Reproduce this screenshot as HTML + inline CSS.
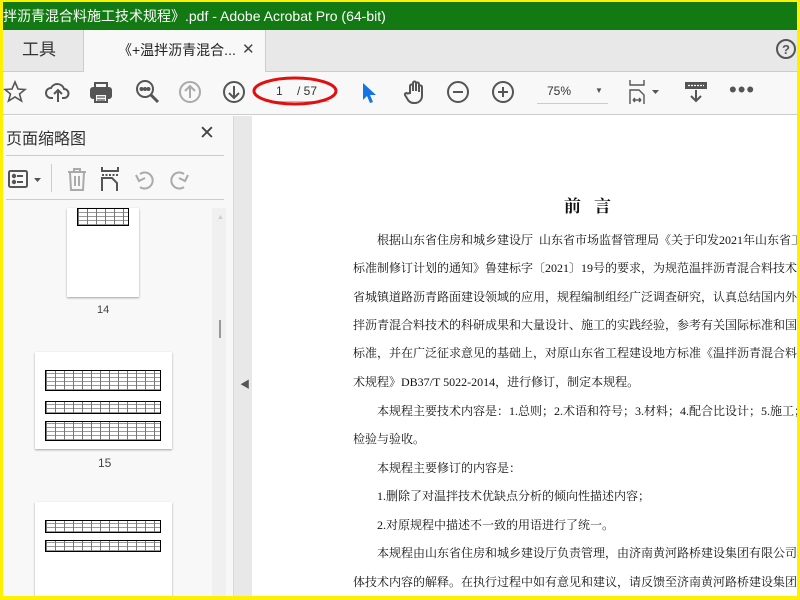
<!DOCTYPE html>
<html><head><meta charset="utf-8"><style>
*{margin:0;padding:0;box-sizing:border-box}
body{width:800px;height:600px;overflow:hidden;position:relative;background:#ffef00;font-family:"Liberation Sans","Noto Sans CJK SC",sans-serif}
.a{position:absolute}
#app{position:absolute;left:3px;top:2px;width:794px;height:594px;background:#fff;overflow:hidden}
.title{left:0;top:0;width:794px;height:28px;background:#137913;color:#fff;font-size:14px;line-height:28px;padding-left:0;white-space:nowrap}
.tabs{left:0;top:28px;width:794px;height:42px;background:#e8e8e8;border-bottom:1px solid #ccc}
.tb{left:0;top:70px;width:794px;height:43px;background:#f8f8f8;border-bottom:1px solid #ccc}
.ic{position:absolute;stroke:#555;fill:none;stroke-width:2}
.panel{left:0;top:114px;width:230px;height:480px;background:#f8f8f8}
.div{left:230px;top:114px;width:19px;height:480px;background:#e8e8e8;border-left:1px solid #d8d8d8}
.doc{left:249px;top:114px;width:545px;height:480px;background:#fff;font-family:"Liberation Serif","Noto Serif CJK SC",serif;font-size:12px;color:#111;white-space:nowrap}
.doc p{position:absolute;left:101px}
.doc p.i{left:125px}
.th{position:absolute;background:#fff;box-shadow:0 1px 2px rgba(0,0,0,.35)}
.tbl{position:absolute;border:1px solid #000;background:repeating-linear-gradient(90deg,#777 0 1px,transparent 1px 9px),repeating-linear-gradient(0deg,#999 0 1px,#fff 1px 4px)}
</style></head><body><div id="app">
<div class="a title">拌沥青混合料施工技术规程》.pdf - Adobe Acrobat Pro (64-bit)</div>
<div class="a tabs">
 <div class="a" style="left:0;top:0;width:81px;height:42px;border-right:1px solid #ccc;font-size:17px;color:#333;line-height:40px;padding-left:19px">工具</div>
 <div class="a" style="left:81px;top:0;width:182px;height:43px;background:#f8f8f8;border-right:1px solid #ccc;font-size:14px;color:#222;line-height:40px;padding-left:34px">《+温拌沥青混合...<span style="position:absolute;left:158px;font-size:15px;color:#444">✕</span></div>
 <svg class="a" style="left:772px;top:8px" width="22" height="22"><circle cx="11" cy="11" r="9" fill="none" stroke="#555" stroke-width="2"/><text x="11" y="16" font-size="13" font-weight="bold" text-anchor="middle" fill="#555" font-family="Liberation Sans">?</text></svg>
</div>
<div class="a tb">
 <svg class="ic" style="left:0;top:8px" width="24" height="24"><polygon points="12,2 15,9 22,9.5 16.5,14 18.5,21 12,17 5.5,21 7.5,14 2,9.5 9,9" stroke-width="1.6"/></svg>
 <svg class="ic" style="left:42px;top:8px" width="26" height="24"><path d="M8 18H6a5 5 0 0 1 0-10 7 7 0 0 1 13 1 4.5 4.5 0 0 1 0 9h-2M13 22V11M9 14l4-4 4 4"/></svg>
 <svg class="ic" style="left:86px;top:8px" width="24" height="24"><path d="M6 8V3h12v5" /><rect x="2" y="8" width="20" height="10" rx="2" fill="#555"/><rect x="6" y="14" width="12" height="8" fill="#f8f8f8"/><path d="M8 17h8M8 20h8" stroke-width="1.2"/></svg>
 <svg class="ic" style="left:132px;top:7px" width="26" height="26"><circle cx="10" cy="10" r="8"/><path d="M16 16l7 7" stroke-width="3"/><circle cx="6.5" cy="10" r="1" fill="#555"/><circle cx="10" cy="10" r="1" fill="#555"/><circle cx="13.5" cy="10" r="1" fill="#555"/></svg>
 <svg class="ic" style="left:175px;top:8px;stroke:#aaa" width="24" height="24"><circle cx="12" cy="12" r="10"/><path d="M12 18V6M7 11l5-5 5 5"/></svg>
 <svg class="ic" style="left:219px;top:8px" width="24" height="24"><circle cx="12" cy="12" r="10"/><path d="M12 6v12M7 13l5 5 5-5"/></svg>
 <div class="a" style="left:262px;top:10px;width:64px;height:20px;border-bottom:1px solid #bbb;font-size:12px;color:#333"><span style="position:absolute;left:11px;top:2px">1</span><span style="position:absolute;left:32px;top:2px">/ 57</span></div>
 <svg class="a" style="left:248px;top:0" width="90" height="38"><ellipse cx="44" cy="19" rx="41" ry="13" fill="none" stroke="#e01010" stroke-width="3"/></svg>
 <svg class="a" style="left:358px;top:10px" width="16" height="22"><path d="M2 1v17l4-4 3 7 3-1-3-7h6z" fill="#1473e6"/></svg>
 <svg class="ic" style="left:400px;top:7px" width="26" height="26" stroke-width="1.8"><path d="M7 14V7a1.5 1.5 0 0 1 3 0v5V4a1.5 1.5 0 0 1 3 0v8V5a1.5 1.5 0 0 1 3 0v8V8a1.5 1.5 0 0 1 3 0v9a7 7 0 0 1-7 7h-1a7 7 0 0 1-6-3l-3-5a1.5 1.5 0 0 1 2.5-1.5z"/></svg>
 <svg class="ic" style="left:443px;top:8px" width="24" height="24"><circle cx="12" cy="12" r="10"/><path d="M7 12h10"/></svg>
 <svg class="ic" style="left:488px;top:8px" width="24" height="24"><circle cx="12" cy="12" r="10"/><path d="M7 12h10M12 7v10"/></svg>
 <div class="a" style="left:534px;top:8px;width:71px;height:24px;border-bottom:1px solid #ccc;font-size:12px;color:#333;padding-left:10px;line-height:22px">75%<span style="position:absolute;left:58px;top:0;font-size:8px;color:#555">▼</span></div>
 <svg class="ic" style="left:625px;top:6px" width="34" height="28" stroke-width="1.8"><path d="M2 2v5h14V2M2 26V12h9l5 5v9M5 22h8M5 22l2-2M5 22l2 2M13 22l-2-2M13 22l-2 2" stroke-width="1.4"/><path d="M24 12h7l-3.5 4z" fill="#555" stroke="none"/></svg>
 <svg class="ic" style="left:681px;top:8px" width="24" height="24"><rect x="1" y="2" width="22" height="7" fill="#555" stroke="none"/><path d="M4 5.5h16" stroke="#fff" stroke-dasharray="2 1" stroke-width="1.2"/><path d="M12 10v11M7 16l5 5 5-5"/></svg>
 <div class="a" style="left:726px;top:8px;font-size:22px;color:#555;letter-spacing:1px;line-height:20px">•••</div>
</div>
<div class="a panel">
 <div class="a" style="left:3px;top:9px;font-size:16px;color:#333">页面缩略图</div>
 <div class="a" style="left:196px;top:6px;font-size:19px;color:#444">✕</div>
 <div class="a" style="left:3px;top:39px;width:218px;height:1px;background:#ccc"></div>
 <svg class="ic" style="left:4px;top:52px" width="40" height="24"><rect x="2" y="3" width="18" height="16" rx="1.5"/><circle cx="7" cy="8" r="1.2" fill="#555"/><circle cx="7" cy="14" r="1.2" fill="#555"/><path d="M10 8h6M10 14h6"/><path d="M27 10h7l-3.5 4z" fill="#555" stroke="none"/></svg>
 <div class="a" style="left:48px;top:48px;width:1px;height:28px;background:#ccc"></div>
 <svg class="ic" style="left:62px;top:50px;stroke:#aaa" width="24" height="26"><path d="M3 6h18M9 6V3h6v3M5 6l1 18h12l1-18M10 10v10M14 10v10"/></svg>
 <svg class="ic" style="left:96px;top:50px" width="24" height="26"><path d="M3 1v4h16V1M3 25V12h10l5 5v8"/><path d="M3 9h17" stroke-dasharray="2 1.5"/></svg>
 <svg class="ic" style="left:130px;top:52px;stroke:#aaa" width="24" height="24" stroke-width="2.5"><path d="M7 19a8 8 0 1 0 0-13M3 7l3 6 6-3"/></svg>
 <svg class="ic" style="left:164px;top:52px;stroke:#aaa" width="24" height="24" stroke-width="2.5"><path d="M17 19a8 8 0 1 1 0-13M21 7l-3 6-6-3"/></svg>
 <div class="a" style="left:3px;top:83px;width:218px;height:1px;background:#ccc"></div>
 <div class="a" style="left:209px;top:92px;width:14px;height:388px;background:#f0f0f0"></div>
 <div class="a" style="left:214px;top:98px;font-size:7px;color:#ccc">▲</div>
 <div class="a" style="left:216px;top:204px;width:2px;height:18px;background:#999"></div>
 <div class="th" style="left:64px;top:92px;width:72px;height:89px"><div class="tbl" style="left:10px;top:0;width:52px;height:18px"></div></div>
 <div class="a" style="left:94px;top:188px;font-size:11px;color:#444">14</div>
 <div class="th" style="left:32px;top:236px;width:137px;height:97px"><div class="tbl" style="left:10px;top:18px;width:116px;height:21px"></div><div class="tbl" style="left:10px;top:49px;width:116px;height:13px"></div><div class="tbl" style="left:10px;top:69px;width:116px;height:20px"></div></div>
 <div class="a" style="left:95px;top:340px;font-size:12px;color:#444">15</div>
 <div class="th" style="left:32px;top:386px;width:137px;height:96px"><div class="tbl" style="left:10px;top:18px;width:116px;height:13px"></div><div class="tbl" style="left:10px;top:38px;width:116px;height:12px"></div></div>
</div>
<div class="a div"><div class="a" style="left:6px;top:260px;font-size:10px;color:#555">◀</div></div>
<div class="a doc">
 <div class="a" style="left:312px;top:76px;font-size:17px;font-weight:bold;letter-spacing:13px">前言</div>
 <p class="i" style="top:115px">根据山东省住房和城乡建设厅&nbsp;&nbsp;山东省市场监督管理局《关于印发2021年山东省工程</p>
 <p style="top:143px">标准制修订计划的通知》鲁建标字〔2021〕19号的要求，为规范温拌沥青混合料技术在</p>
 <p style="top:172px">省城镇道路沥青路面建设领域的应用，规程编制组经广泛调查研究，认真总结国内外温</p>
 <p style="top:200px">拌沥青混合料技术的科研成果和大量设计、施工的实践经验，参考有关国际标准和国外</p>
 <p style="top:228px">标准，并在广泛征求意见的基础上，对原山东省工程建设地方标准《温拌沥青混合料施</p>
 <p style="top:257px">术规程》DB37/T 5022-2014，进行修订，制定本规程。</p>
 <p class="i" style="top:286px">本规程主要技术内容是：1.总则；2.术语和符号；3.材料；4.配合比设计；5.施工；6.</p>
 <p style="top:314px">检验与验收。</p>
 <p class="i" style="top:343px">本规程主要修订的内容是：</p>
 <p class="i" style="top:371px">1.删除了对温拌技术优缺点分析的倾向性描述内容；</p>
 <p class="i" style="top:400px">2.对原规程中描述不一致的用语进行了统一。</p>
 <p class="i" style="top:428px">本规程由山东省住房和城乡建设厅负责管理，由济南黄河路桥建设集团有限公司负责具</p>
 <p style="top:457px">体技术内容的解释。在执行过程中如有意见和建议，请反馈至济南黄河路桥建设集团</p>
</div>
</div></body></html>
